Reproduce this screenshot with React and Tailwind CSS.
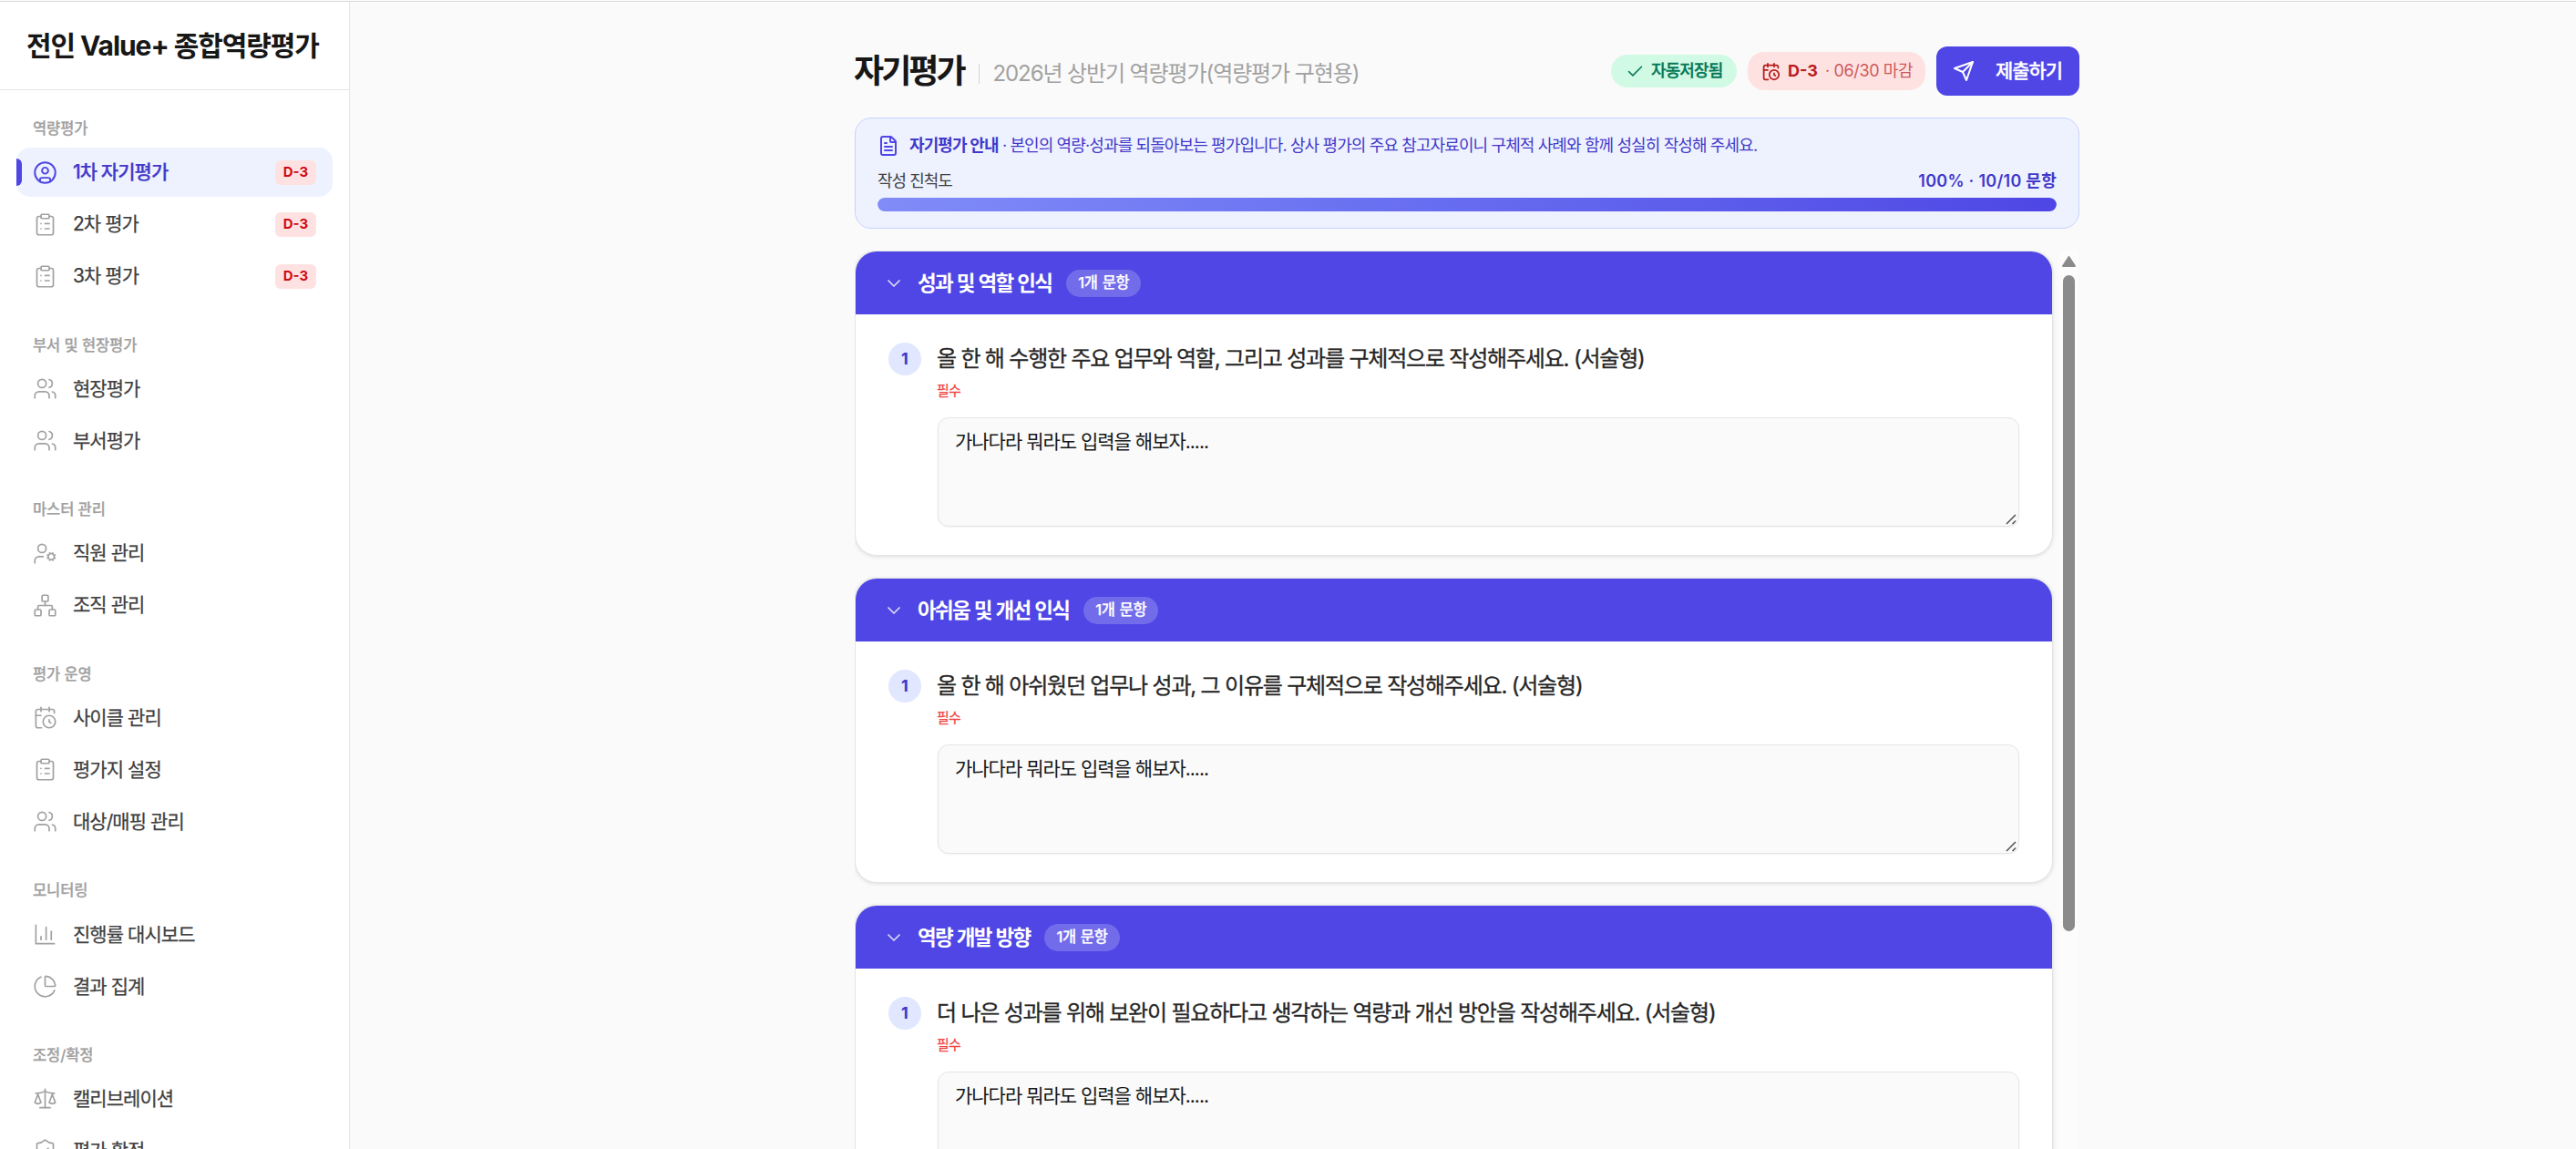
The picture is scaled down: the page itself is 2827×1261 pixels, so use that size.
import React, { useState } from 'react';
import {
    CircleUser, ClipboardList, Users, UserCog, Network, CalendarClock, ChartPie,
    Scale, ShieldCheck, Check, FileText, ChevronDown,
} from 'lucide-react';

const BarChartIcon = ({ className, strokeWidth }) => (
    <svg className={className} viewBox="0 0 24 24" fill="none" stroke="currentColor" strokeWidth={strokeWidth} strokeLinecap="round" strokeLinejoin="round">
        <path d="M3 3v18h18" />
        <path d="M18 17V9" />
        <path d="M13 17V5" />
        <path d="M8 17v-3" />
    </svg>
);

const SendIcon = ({ className }) => (
    <svg className={className} viewBox="0 0 24 24" fill="none" stroke="currentColor" strokeWidth={2} strokeLinecap="round" strokeLinejoin="round">
        <path d="m22 2-7 20-4-9-9-4Z" />
        <path d="M22 2 11 13" />
    </svg>
);

const navGroups = [
    {
        title: '역량평가',
        items: [
            { label: '1차 자기평가', icon: CircleUser, badge: 'D-3' },
            { label: '2차 평가', icon: ClipboardList, badge: 'D-3' },
            { label: '3차 평가', icon: ClipboardList, badge: 'D-3' },
        ],
    },
    {
        title: '부서 및 현장평가',
        items: [
            { label: '현장평가', icon: Users },
            { label: '부서평가', icon: Users },
        ],
    },
    {
        title: '마스터 관리',
        items: [
            { label: '직원 관리', icon: UserCog },
            { label: '조직 관리', icon: Network },
        ],
    },
    {
        title: '평가 운영',
        items: [
            { label: '사이클 관리', icon: CalendarClock },
            { label: '평가지 설정', icon: ClipboardList },
            { label: '대상/매핑 관리', icon: Users },
        ],
    },
    {
        title: '모니터링',
        items: [
            { label: '진행률 대시보드', icon: BarChartIcon },
            { label: '결과 집계', icon: ChartPie },
        ],
    },
    {
        title: '조정/확정',
        items: [
            { label: '캘리브레이션', icon: Scale },
            { label: '평가 확정', icon: ShieldCheck },
        ],
    },
];

const sections = [
    { title: '성과 및 역할 인식', question: '올 한 해 수행한 주요 업무와 역할, 그리고 성과를 구체적으로 작성해주세요. (서술형)' },
    { title: '아쉬움 및 개선 인식', question: '올 한 해 아쉬웠던 업무나 성과, 그 이유를 구체적으로 작성해주세요. (서술형)' },
    { title: '역량 개발 방향', question: '더 나은 성과를 위해 보완이 필요하다고 생각하는 역량과 개선 방안을 작성해주세요. (서술형)' },
];

const Sidebar = () => {
    const [active, setActive] = useState('1차 자기평가');

    return (
        <aside className="w-96 shrink-0 bg-white border-r border-[#e5e5e5] flex flex-col overflow-hidden">
            <div className="h-[97px] shrink-0 border-b border-[#e5e5e5] px-[29px] flex items-center">
                <h1 className="text-[30px] leading-none font-bold tracking-[-0.036em] text-[#171717] whitespace-nowrap">전인 Value+ 종합역량평가</h1>
            </div>
            <nav className="px-[18px] pt-[30px] flex flex-col gap-[35.6px]">
                {navGroups.map((group) => (
                    <div key={group.title}>
                        <div className="h-6 mb-[9px] px-[18px] text-[16.5px] leading-6 font-medium tracking-[-0.005em] text-[#a1a1a1] [-webkit-text-stroke:0.25px]">
                            {group.title}
                        </div>
                        <ul className="flex flex-col gap-[3px] mb-px">
                            {group.items.map((item) => {
                                const Icon = item.icon;
                                const isActive = item.label === active;
                                return (
                                    <li
                                        key={item.label}
                                        onClick={() => setActive(item.label)}
                                        className={`relative h-[54px] rounded-[15px] px-[18px] flex items-center cursor-pointer ${isActive ? 'bg-[#eef2ff] text-[#4338ca]' : 'text-[#404040]'}`}
                                    >
                                        {isActive && <span className="absolute left-0 top-3 w-1.5 h-[30px] rounded-r-md bg-[#4f46e5]" />}
                                        <Icon className={`size-[27px] mr-[17px] ${isActive ? 'text-[#4f46e5]' : 'text-[#a1a1a1]'}`} strokeWidth={isActive ? 1.75 : 1.5} />
                                        <span className={`flex-1 text-[21px] tracking-[-0.045em] [-webkit-text-stroke:0.25px] ${isActive ? 'font-medium' : 'font-normal'}`}>{item.label}</span>
                                        {item.badge && (
                                            <span className="w-[45px] h-[27px] rounded-md bg-[#fee2e2] text-[#cf0a12] text-[15px] font-bold flex items-center justify-center">
                                                {item.badge}
                                            </span>
                                        )}
                                    </li>
                                );
                            })}
                        </ul>
                    </div>
                ))}
            </nav>
        </aside>
    );
};

const PageHeader = () => (
    <header className="shrink-0 flex items-center justify-between h-[54px]">
        <div className="flex items-center">
            <h2 className="-ml-px text-[36px] leading-none font-bold tracking-[-0.083em] text-[#171717]">자기평가</h2>
            <span className="ml-[16px] mt-1.5 w-px h-[22px] bg-[#d4d4d4]" />
            <span className="ml-[15px] mt-1.5 text-2xl leading-none tracking-[-0.046em] text-[#a1a1a1]">2026년 상반기 역량평가(역량평가 구현용)</span>
        </div>
        <div className="flex items-center gap-3">
            <span className="h-9 w-[138px] pl-4 rounded-full bg-[#d1fae5] text-[#047857] text-lg font-medium tracking-[-0.05em] [-webkit-text-stroke:0.3px] flex items-center gap-[7px]">
                <Check className="size-[21px]" strokeWidth={1.75} />
                자동저장됨
            </span>
            <span className="h-[42px] w-[195px] pl-[15px] rounded-[18px] bg-[#fee2e2] text-[#b91c1c] text-lg flex items-center">
                <CalendarClock className="size-[21px]" strokeWidth={2} />
                <span className="ml-2 font-bold">D-3</span>
                <span className="ml-2 opacity-70 tracking-[-0.02em]">· 06/30 마감</span>
            </span>
            <button className="h-[54px] w-[157px] pl-[18px] rounded-xl bg-[#4f46e5] text-white text-[21px] font-medium tracking-[-0.05em] [-webkit-text-stroke:0.3px] flex items-center">
                <SendIcon className="size-6 mr-[23px]" />
                제출하기
            </button>
        </div>
    </header>
);

const ProgressPanel = () => (
    <section className="shrink-0 mt-6 h-[122px] rounded-[18px] border border-[#c7d2fe] bg-[#eef2ff] px-6 pt-[18px] text-lg">
        <div className="flex items-center h-6 text-[#4338ca] tracking-[-0.049em] whitespace-nowrap">
            <FileText className="size-6 mr-[11px] text-[#4f46e5]" strokeWidth={2} />
            <p><b className="font-semibold">자기평가 안내</b> · 본인의 역량·성과를 되돌아보는 평가입니다. 상사 평가의 주요 참고자료이니 구체적 사례와 함께 성실히 작성해 주세요.</p>
        </div>
        <div className="mt-[15px] h-6 flex items-center justify-between">
            <span className="tracking-[-0.055em] text-[#404040]">작성 진척도</span>
            <span className="font-semibold tracking-[0.015em] text-[#4338ca]">100% · 10/10 문항</span>
        </div>
        <div className="mt-[6px] h-[15px] rounded-full bg-[#e0e7ff] overflow-hidden">
            <div className="h-full w-full rounded-full bg-linear-to-r from-[#818cf8] to-[#4f46e5]" />
        </div>
    </section>
);

const QuestionCard = ({ title, question }) => {
    const [answer, setAnswer] = useState('가나다라 뭐라도 입력을 해보자.....');

    return (
        <section className="shrink-0 rounded-3xl border border-[#e5e5e5] bg-white overflow-hidden shadow-[0_1px_4px_rgba(0,0,0,0.12)]">
            <div className="h-[69px] px-[30px] bg-[#4f46e5] text-white flex items-center">
                <ChevronDown className="size-6 text-white/80" strokeWidth={1.75} />
                <h3 className="ml-[14px] text-[22.5px] font-bold tracking-[-0.078em] [word-spacing:1.3px]">{title}</h3>
                <span className="ml-4 h-[30px] px-[13px] rounded-full bg-white/20 text-[16.5px] font-medium tracking-[-0.02em] [word-spacing:1px] [-webkit-text-stroke:0.25px] flex items-center">1개 문항</span>
            </div>
            <div className="pt-[31px] pb-[31px] px-9 flex gap-[18px]">
                <span className="size-9 shrink-0 rounded-full bg-[#e0e7ff] text-[#4338ca] text-lg font-bold flex items-center justify-center">1</span>
                <div className="flex-1">
                    <p className="-ml-px h-9 leading-9 text-2xl font-normal tracking-[-0.05em] [-webkit-text-stroke:0.3px] text-[#262626]">{question}</p>
                    <p className="-ml-px mt-[5px] h-6 leading-6 text-[15px] font-normal tracking-[-0.05em] [-webkit-text-stroke:0.25px] text-[#ef4444]">필수</p>
                    <div className="relative mt-[17px] h-[120px]">
                        <textarea
                            value={answer}
                            onChange={(e) => setAnswer(e.target.value)}
                            className="block w-full h-full resize-none rounded-xl border border-[#e5e5e5] bg-[#fafafa] px-[18px] py-[11px] text-[21px] leading-[30px] tracking-[-0.048em] text-[#171717] outline-none shadow-[0_1px_2px_rgba(0,0,0,0.05)]"
                        />
                        <svg className="absolute right-[3px] bottom-[2px] size-3 text-[#525252]" viewBox="0 0 12 12" stroke="currentColor" strokeWidth="1.5">
                            <path d="M1 11 11 1M7.5 11l3.5-3.5" />
                        </svg>
                    </div>
                </div>
            </div>
        </section>
    );
};

const App = () => {
    return (
        <div className="h-[1261px] pt-px overflow-hidden bg-[#fafafa] font-['Inter','Noto_Sans_CJK_KR',sans-serif]">
            <div className="h-full border-t border-[#d9dce0] flex">
                <Sidebar />
                <main className="pl-[554px] pt-[49px] flex flex-col">
                    <div className="w-[1344px] flex flex-col min-h-0">
                        <PageHeader />
                        <ProgressPanel />
                        <div className="mt-6 flex min-h-0 overflow-hidden">
                            <div className="w-[1315px] flex flex-col gap-6">
                                {sections.map((section) => (
                                    <QuestionCard key={section.title} title={section.title} question={section.question} />
                                ))}
                            </div>
                            {/* Scrollbar */}
                            <div className="ml-[7px] w-[21px] bg-[#fcfcfc] flex flex-col items-center pt-[6px]">
                                <svg className="w-[15px] h-3 text-[#8b8b8b]" viewBox="0 0 15 12" fill="currentColor" stroke="currentColor" strokeWidth="2" strokeLinejoin="round">
                                    <path d="M7.5 1 14 11H1Z" />
                                </svg>
                                <div className="mt-[9px] w-[13px] h-[720px] shrink-0 rounded-full bg-[#8b8b8b]" />
                            </div>
                        </div>
                    </div>
                </main>
            </div>
        </div>
    );
};

export default App;
